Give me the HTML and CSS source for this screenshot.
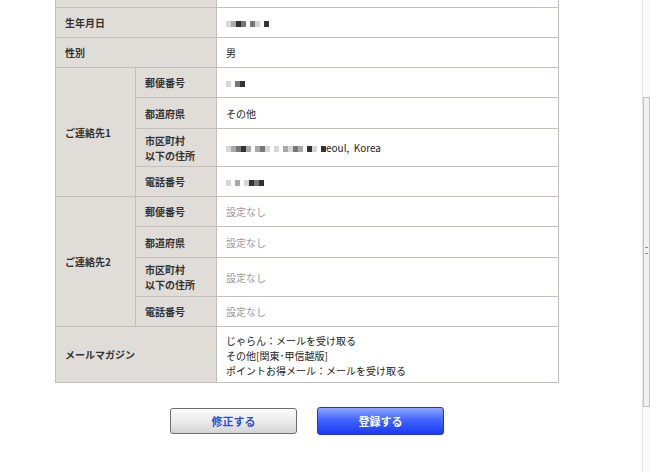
FILE: index.html
```html
<!DOCTYPE html>
<html lang="ja">
<head>
  <meta charset="UTF-8">
  <title>会員情報の確認</title>
  <link rel="stylesheet" href="styles.css">
</head>
<body>
  <div class="page">
    <table class="confirm">
      <colgroup>
        <col class="col-group">
        <col class="col-sub">
        <col>
      </colgroup>
      <tr class="h30"><th colspan="2"></th><td></td></tr>
      <tr class="h30">
        <th colspan="2">生年月日</th>
        <td><span class="mosaic"><i class="m1"></i><i class="m2"></i><i class="m4"></i><i class="m3"></i><i class="gap"></i><i class="m3"></i><i class="m1"></i><i class="gap"></i><i class="m4"></i></span></td>
      </tr>
      <tr class="h30"><th colspan="2">性別</th><td>男</td></tr>
      <tr class="h30">
        <th rowspan="4">ご連絡先1</th>
        <th>郵便番号</th>
        <td><span class="mosaic"><i class="m1"></i><i class="gap"></i><i class="m3"></i><i class="m4"></i></span></td>
      </tr>
      <tr class="h31"><th>都道府県</th><td>その他</td></tr>
      <tr class="h38">
        <th class="two">市区町村<br>以下の住所</th>
        <td><span class="mosaic"><i class="m1"></i><i class="m2"></i><i class="m3"></i><i class="m4"></i><i class="m2"></i><i class="gap"></i><i class="m2"></i><i class="m3"></i><i class="m1"></i><i class="gap"></i><i class="m1"></i><i class="gap"></i><i class="m2"></i><i class="m1"></i><i class="m3"></i><i class="m2"></i><i class="gap"></i><i class="m4"></i><i class="m1"></i><i class="gap"></i><i class="m4"></i></span>eoul,&nbsp;&nbsp;Korea</td>
      </tr>
      <tr class="h30">
        <th>電話番号</th>
        <td><span class="mosaic"><i class="m1"></i><i class="gap"></i><i class="m2"></i><i class="gap"></i><i class="m1"></i><i class="m4"></i><i class="m3"></i><i class="m4"></i></span></td>
      </tr>
      <tr class="h30">
        <th rowspan="4">ご連絡先2</th>
        <th>郵便番号</th>
        <td class="none">設定なし</td>
      </tr>
      <tr class="h31"><th>都道府県</th><td class="none">設定なし</td></tr>
      <tr class="h39"><th class="two">市区町村<br>以下の住所</th><td class="none">設定なし</td></tr>
      <tr class="h30"><th>電話番号</th><td class="none">設定なし</td></tr>
      <tr class="h56">
        <th colspan="2">メールマガジン</th>
        <td class="mail">じゃらん：メールを受け取る<br>その他[関東･甲信越版]<br>ポイントお得メール：メールを受け取る</td>
      </tr>
    </table>

    <div class="buttons">
      <button class="btn btn-back">修正する</button>
      <button class="btn btn-submit">登録する</button>
    </div>
  </div>

  <!-- scrollbar of the surrounding frame -->
  <div class="scrollbar"><div class="thumb"><span class="grip"></span></div></div>
</body>
</html>
```

FILE: styles.css
```css
body {
  margin: 0;
  background: #fff;
  font-family: "Noto Sans CJK JP", "Noto Sans", sans-serif;
  font-size: 10px;
  color: #333;
  overflow: hidden;
}
.page {
  width: 504px;
  margin-left: 55px;
}
.confirm {
  width: 504px;
  margin-top: -23px;
  border-collapse: collapse;
  table-layout: fixed;
}
.col-group { width: 80px; }
.col-sub { width: 81px; }
.confirm th,
.confirm td {
  border: 1px solid #c3c0ba;
  padding: 0 9px;
  line-height: 15px;
  vertical-align: middle;
  text-align: left;
}
.confirm th {
  background: #e0ddd8;
  font-weight: bold;
  color: #333;
}
.confirm td {
  background: #fff;
  color: #222;
}
.confirm td.none {
  color: #999;
}
.confirm td.mail {
  padding-top: 1px;
}
.h30 { height: 30px; }
.h31 { height: 31px; }
.h38 { height: 38px; }
.h39 { height: 39px; }
.h56 { height: 56px; }

.mosaic {
  display: inline-flex;
  vertical-align: middle;
}
.mosaic i {
  display: inline-block;
  width: 5px;
  height: 6px;
}
.mosaic .m1 { background: #d6d6d6; }
.mosaic .m2 { background: #a9a9a9; }
.mosaic .m3 { background: #777; }
.mosaic .m4 { background: #333; }
.mosaic .gap { width: 4px; }

.buttons {
  display: flex;
  justify-content: center;
  gap: 20px;
  margin-top: 25px;
}
.btn {
  width: 127px;
  height: 26px;
  border-radius: 3px;
  font-family: "Noto Sans CJK JP", sans-serif;
  font-size: 11px;
  font-weight: bold;
  cursor: pointer;
}
.btn-back {
  background: linear-gradient(#fdfdfd, #e9e9e9 55%, #d4d4d4);
  border: 1px solid #6d6d6d;
  color: #2a4fd0;
}
.btn-submit {
  height: 28px;
  margin-top: -1px;
  background: linear-gradient(#8ea6ff, #4266ff 45%, #1a3af2);
  border: 1px solid #2737b8;
  color: #fff;
}

.scrollbar {
  position: fixed;
  top: 0;
  right: 0;
  width: 7px;
  height: 100%;
  border-left: 1px solid #e4e4e4;
  background: #fafafa;
}
.thumb {
  position: absolute;
  top: 97px;
  left: 0;
  width: 5px;
  height: 308px;
  border: 1px solid #c4c4c4;
  background: #f0f0f0;
}
.grip {
  position: absolute;
  top: 149px;
  left: 1px;
  width: 3px;
  height: 5px;
  border-top: 1px solid #888;
  border-bottom: 1px solid #888;
}
```
